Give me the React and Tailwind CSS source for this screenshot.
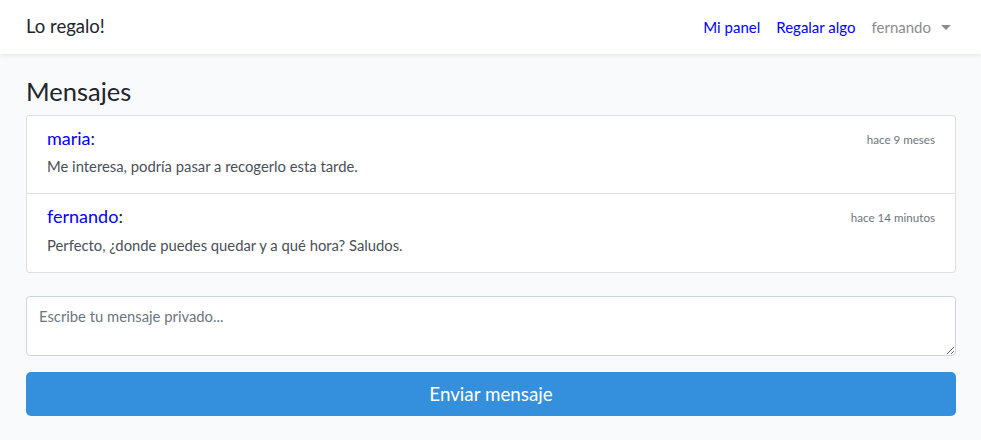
export default function App() {
  const messages = [
    { user: "maria", when: "hace 9 meses", text: "Me interesa, podría pasar a recogerlo esta tarde." },
    { user: "fernando", when: "hace 14 minutos", text: "Perfecto, ¿donde puedes quedar y a qué hora? Saludos." },
  ]

  return (
    <div className="min-h-[440px] bg-[#f8fafc] text-[#212529] font-['Lato','Noto_Sans',sans-serif]">
      <nav className="h-[54px] bg-white shadow-[0_2px_4px_rgba(0,0,0,0.075)] flex items-center justify-between pl-[26px] pr-[25px]">
        <a className="text-[18.5px] text-[#212529]">Lo regalo!</a>
        <div className="flex items-center gap-4 text-[15px] pr-[5px]">
          <a className="text-[#0000ff]">Mi panel</a>
          <a className="text-[#0000ff]">Regalar algo</a>
          <a className="flex items-center text-[#8c8c8c]">
            fernando
            <span className="ml-[10px] w-0 h-0 border-x-[5px] border-x-transparent border-t-[5px] border-t-[#8c8c8c]" />
          </a>
        </div>
      </nav>

      <main className="pl-[26px] pr-[25px] pt-[22px]">
        <h3 className="text-[25.5px] leading-[1.2] mb-[8px]">Mensajes</h3>

        <div className="bg-white border border-[rgba(0,0,0,0.125)] rounded-[4px]">
          {messages.map((m, i) => (
            <div key={i} className={"px-[20px] pt-[12px] pb-[16px]" + (i > 0 ? " border-t border-[rgba(0,0,0,0.125)]" : "")}>
              <div className="flex justify-between items-start">
                <div className="text-[18px] leading-[1.2]">
                  <a className="text-[#0000ff]">{m.user}</a>:
                </div>
                <span className="text-[11.6px] text-[#6c757d] pt-[3px]">{m.when}</span>
              </div>
              <p className="text-[14.8px] mt-[6px] text-[#495057]">{m.text}</p>
            </div>
          ))}
        </div>

        <textarea
          className="block w-full mt-[23px] h-[60px] bg-white border border-[#ced4da] rounded-[4px] px-[12px] py-[8px] text-[14.8px] placeholder-[#6c757d] outline-none"
          placeholder="Escribe tu mensaje privado..."
        />

        <button className="mt-[16px] w-full h-[44px] rounded-[5px] bg-[#3490dc] text-white text-[18.8px]">
          Enviar mensaje
        </button>
      </main>
    </div>
  )
}
